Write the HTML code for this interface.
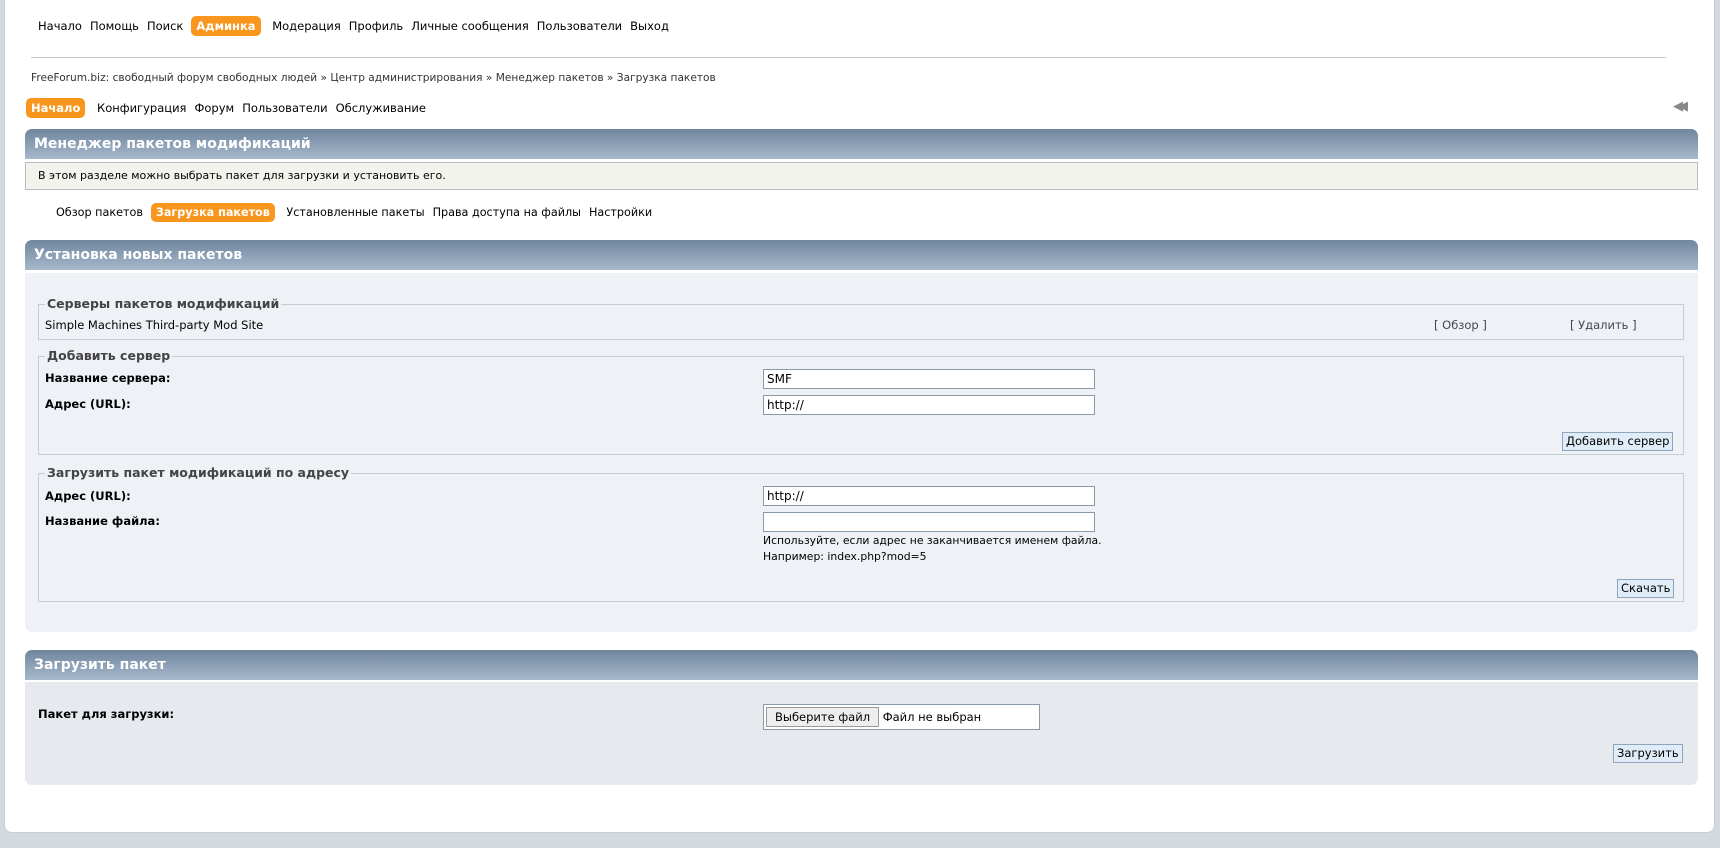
<!DOCTYPE html>
<html><head><meta charset="utf-8"><style>
*{box-sizing:border-box}
body{margin:0;width:1720px;height:848px;background:#d4d9e0;font-family:"DejaVu Sans","Liberation Sans",sans-serif;font-size:11.5px;color:#000;position:relative;overflow:hidden}
.page{position:absolute;left:4px;top:0;width:1711px;height:833px;background:#fff;border:1px solid #c8ced6;border-top:none;border-radius:0 0 8px 8px}
.a{position:absolute;white-space:nowrap}
.nav span{margin-right:8px}
.btn{background:#f8961d;color:#fff;font-weight:bold;border-radius:5px;padding:3px 5px}
.hdr{position:absolute;left:24px;width:1673px;height:30px;border-radius:7px 7px 0 0;background:linear-gradient(#6f869e,#a7b8cc);color:#fff;font-weight:bold;font-size:14px;padding:7px 9px}
.fs{position:absolute;border:1px solid #c5ccd4}
.leg{position:absolute;top:-9px;left:6px;background:#eef2f6;padding:0 2px;font-weight:bold;color:#444;font-size:12.5px}
.inp{position:absolute;left:758px;width:332px;height:20px;border:1px solid #8a98a8;background:#fff;font-size:12px;padding:2px 3px}
.b{font-weight:bold}
.sb{position:absolute;border:1px solid #8fa5bd;background:#e0ecf8;font-size:11.5px;padding:1px 3px;height:19px}
</style></head><body>
<div class="page">
<div class="a nav" style="left:33px;top:19px"><span>Начало</span><span>Помощь</span><span>Поиск</span><span class="btn">Админка</span> <span>Модерация</span><span>Профиль</span><span>Личные сообщения</span><span>Пользователи</span><span>Выход</span></div>
<div class="a" style="left:26px;top:57px;width:1635px;border-top:1px solid #c8c8c8"></div>
<div class="a" style="left:26px;top:72px;color:#333;font-size:10.6px">FreeForum.biz: свободный форум свободных людей » Центр администрирования » Менеджер пакетов » Загрузка пакетов</div>
<div class="a nav" style="left:21px;top:101px"><span class="btn">Начало</span> <span>Конфигурация</span><span>Форум</span><span>Пользователи</span><span>Обслуживание</span></div>
<div class="a" style="left:1668px;top:99px;color:#888;font-size:13px;letter-spacing:-5px">◀◀</div>
<div class="hdr" style="top:129px;left:20px">Менеджер пакетов модификаций</div>
<div class="a" style="left:20px;top:162px;width:1673px;height:28px;background:#f3f3ed;border:1px solid #bbb;padding:6px 12px;font-size:11px">В этом разделе можно выбрать пакет для загрузки и установить его.</div>
<div class="a nav" style="left:51px;top:206px;font-size:11.2px"><span>Обзор пакетов</span><span class="btn">Загрузка пакетов</span> <span>Установленные пакеты</span><span>Права доступа на файлы</span><span>Настройки</span></div>
<div class="hdr" style="top:240px;left:20px">Установка новых пакетов</div>
<div class="a" style="left:20px;top:273px;width:1673px;height:359px;background:#eef2f6;border-radius:0 0 7px 7px">
 <div class="fs" style="left:13px;top:31px;width:1646px;height:36px"><div class="leg">Серверы пакетов модификаций</div>
  <div class="a" style="left:6px;top:13px">Simple Machines Third-party Mod Site</div>
  <div class="a" style="left:1395px;top:13px;color:#445">[ Обзор ]</div>
  <div class="a" style="left:1531px;top:13px;color:#445">[ Удалить ]</div></div>
 <div class="fs" style="left:13px;top:83px;width:1646px;height:99px"><div class="leg">Добавить сервер</div>
  <div class="a b" style="left:6px;top:14px">Название сервера:</div>
  <div class="a b" style="left:6px;top:40px">Адрес (URL):</div>
  <div class="sb" style="left:1523px;top:75px">Добавить сервер</div></div>
 <div class="fs" style="left:13px;top:200px;width:1646px;height:129px"><div class="leg">Загрузить пакет модификаций по адресу</div>
  <div class="a b" style="left:6px;top:15px">Адрес (URL):</div>
  <div class="a b" style="left:6px;top:40px">Название файла:</div>
  <div class="a" style="left:724px;top:60px;font-size:10.8px">Используйте, если адрес не заканчивается именем файла.</div>
  <div class="a" style="left:724px;top:76px;font-size:10.8px">Например: index.php?mod=5</div>
  <div class="sb" style="left:1578px;top:105px">Скачать</div></div>
</div>
<div class="inp" style="top:369px">SMF</div>
<div class="inp" style="top:395px">http://</div>
<div class="inp" style="top:486px">http://</div>
<div class="inp" style="top:512px"></div>
<div class="hdr" style="top:650px;left:20px">Загрузить пакет</div>
<div class="a" style="left:20px;top:682px;width:1673px;height:103px;background:#e6e9ee;border-radius:0 0 7px 7px">
 <div class="a b" style="left:13px;top:25px">Пакет для загрузки:</div>
 <div class="a" style="left:738px;top:22px;width:277px;height:26px;border:1px solid #8a98a8;background:#fff;padding:2px">
  <span style="display:inline-block;border:1px solid #999;background:#eee;padding:2px 8px;height:20px">Выберите файл</span> Файл не выбран</div>
 <div class="sb" style="left:1588px;top:62px">Загрузить</div>
</div>
</div>
</body></html>
